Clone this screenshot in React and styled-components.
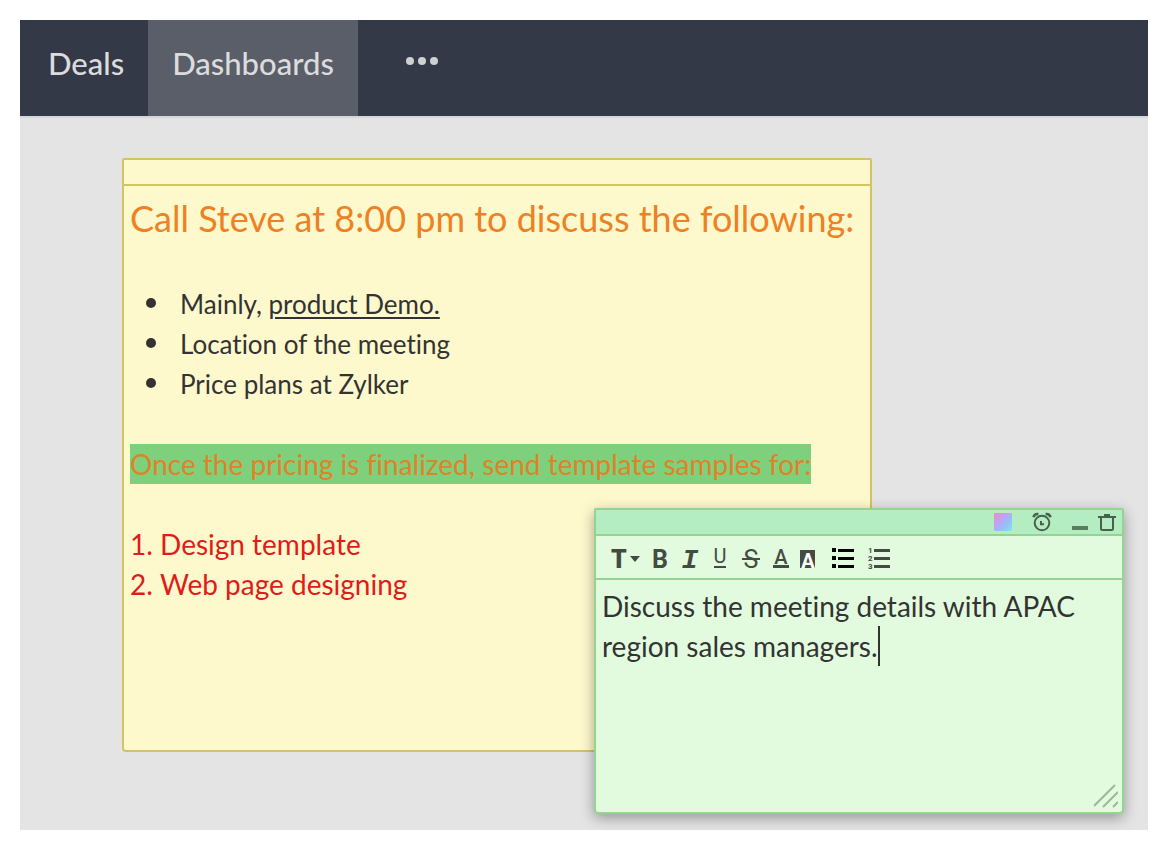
import React, { useState } from 'react';
import styled, { createGlobalStyle } from 'styled-components';

const GlobalStyle = createGlobalStyle`
  *, *::before, *::after { box-sizing: border-box; }
  body {
    margin: 0;
    background: #fff;
    color: #333;
    font-family: Lato, 'Liberation Sans', sans-serif;
    font-size: 28px;
    line-height: 40px;
    font-variant-ligatures: none;
  }
`;

const Page = styled.div`
  display: flex;
  flex-direction: column;
  min-height: 100vh;
  padding: 20px;
`;

const Nav = styled.nav`
  display: flex;
  height: 98px;
  padding-left: 4px;
  background: #343947;
  border-bottom: 2px solid #d8d5da;
`;

const Tab = styled.a`
  display: flex;
  align-items: center;
  padding: 0 24px 10px;
  background: ${(p) => (p.$active ? '#5a5e69' : 'transparent')};
  color: #dcdcde;
  font-size: 31px;
  font-weight: 500;
  text-decoration: none;
`;

const MoreButton = styled.button`
  display: flex;
  align-items: center;
  gap: 4px;
  margin-left: 48px;
  padding: 0 0 14px;
  border: 0;
  background: none;
`;

const Dot = styled.span`
  width: 8px;
  height: 8px;
  border-radius: 50%;
  background: #cfd0d2;
`;

const Board = styled.main`
  position: relative;
  flex: 1;
  min-height: 712px;
  background: #e4e4e4;
`;

const Note = styled.section`
  position: absolute;
  display: flex;
  flex-direction: column;
  left: ${(p) => p.$x}px;
  top: ${(p) => p.$y}px;
  width: ${(p) => p.$w}px;
  min-height: ${(p) => p.$h}px;
  border: 2px solid ${(p) => p.$line};
  border-radius: 2px 2px 4px 4px;
  background: ${(p) => p.$fill};
  box-shadow: ${(p) => (p.$raised ? '0 4px 14px rgba(0, 0, 0, 0.35)' : 'none')};
`;

const NoteBar = styled.header`
  display: flex;
  align-items: center;
  justify-content: flex-end;
  gap: 20px;
  height: 26px;
  padding-right: 6px;
  border-bottom: 2px solid ${(p) => p.$line};
  background: ${(p) => p.$fill};
`;

const BarGroup = styled.div`
  display: flex;
  gap: 10px;
`;

const IconButton = styled.button`
  display: flex;
  align-items: center;
  justify-content: center;
  flex: none;
  width: ${(p) => p.$w}px;
  height: 20px;
  padding: 0;
  border: 0;
  background: none;

  svg { display: block; overflow: visible; }
`;

const Swatch = styled.span`
  width: 18px;
  height: 18px;
  border-radius: 1px;
  background: linear-gradient(135deg, #ee8fc0 0%, #b9a5f8 42%, #8fc5f5 70%, #84e6ea 100%);
`;

const NoteBody = styled.div`
  padding: 6px;
`;

const NoteTitle = styled.h1`
  margin: 0 0 40px;
  color: #ed8124;
  font-size: 36px;
  font-weight: 400;
  line-height: 52px;
  white-space: nowrap;
`;

const Bullets = styled.ul`
  margin: 0 0 40px;
  padding: 0;
  list-style: none;
  font-size: 26px;

  li { display: flex; align-items: center; }
  li::before {
    content: '';
    width: 10px;
    height: 10px;
    margin: 0 24px 2px 16px;
    border-radius: 50%;
    background: #333;
  }
  u { text-decoration-thickness: 2px; text-underline-offset: 3px; }
`;

const Highlight = styled.mark`
  display: inline-block;
  margin-bottom: 40px;
  background: #7fd07c;
  color: #e08228;
`;

const Steps = styled.ol`
  margin: 0;
  padding: 0;
  list-style-position: inside;
  color: #e01b1b;
`;

const Toolbar = styled.div`
  display: flex;
  align-items: center;
  height: 44px;
  padding: 2px 0 0 12px;
  border-bottom: 2px solid ${(p) => p.$line};
`;

const Editor = styled.div`
  position: relative;
  display: flex;
  flex: 1;
`;

const NoteText = styled.textarea`
  flex: 1;
  padding: 6px;
  border: 0;
  outline: 0;
  background: transparent;
  color: #333;
  caret-color: transparent;
  font: inherit;
  font-variant-ligatures: none;
  resize: none;
`;

const Caret = styled.span`
  position: absolute;
  top: 46px;
  left: 282px;
  width: 2px;
  height: 40px;
  background: #333;
`;

const Grip = styled.svg`
  position: absolute;
  right: 4px;
  bottom: 4px;
`;

const ink = '#454b43';
const green = '#94d493';

function Glyph({ char, family = 'Roboto', size, weight = 400, italic, baseline = 20, fill = ink, children }) {
  return (
    <svg width="20" height="20" viewBox="0 0 20 20" aria-hidden="true">
      {children}
      <text
        x="10"
        y={baseline}
        textAnchor="middle"
        fontFamily={`${family}, sans-serif`}
        fontSize={size}
        fontWeight={weight}
        fontStyle={italic ? 'italic' : 'normal'}
        fill={fill}
      >
        {char}
      </text>
    </svg>
  );
}

function AlarmIcon() {
  return (
    <svg width="20" height="20" viewBox="0 0 20 20" fill="none" stroke="#47614d" aria-hidden="true">
      <circle cx="10" cy="11" r="7.3" strokeWidth="2" />
      <path d="M9 9v3.2h3" strokeWidth="2" />
      <path d="M1.5 5.2C2 3 4 1.8 6.4 2M18.5 5.2C18 3 16 1.8 13.6 2" strokeWidth="2.6" />
    </svg>
  );
}

function TrashIcon() {
  return (
    <svg width="18" height="18" viewBox="0 0 18 18" fill="none" stroke="#47614d" strokeWidth="2" aria-hidden="true">
      <path d="M0 4h18M3 4v11.5q0 1.500 1.500 1.500h9q1.500 0 1.500-1.500V4" />
      <path d="M6 2h6" />
    </svg>
  );
}

function BulletListIcon() {
  return (
    <svg width="22" height="20" viewBox="0 0 22 20" fill="#000" aria-hidden="true">
      {[0, 8, 16].map((y) => (
        <g key={y}>
          <rect x="0" y={y} width="4" height="4" />
          <rect x="6" y={y + 1} width="16" height="3" />
        </g>
      ))}
    </svg>
  );
}

function NumberListIcon() {
  return (
    <svg width="22" height="20" viewBox="0 0 22 20" fill={ink} aria-hidden="true">
      {[0, 8, 16].map((y, i) => (
        <g key={y}>
          <text x="0" y={y + 5} fontFamily="Roboto, sans-serif" fontWeight="700" fontSize="8">
            {i + 1}
          </text>
          <rect x="6" y={y + 1} width="16" height="3" />
        </g>
      ))}
    </svg>
  );
}

export default function App() {
  const [text, setText] = useState('Discuss the meeting details with APAC region sales managers.');

  return (
    <Page>
      <GlobalStyle />
      <Nav>
        <Tab href="#deals">Deals</Tab>
        <Tab href="#dashboards" $active aria-current="page">Dashboards</Tab>
        <MoreButton aria-label="More">
          <Dot />
          <Dot />
          <Dot />
        </MoreButton>
      </Nav>

      <Board>
        <Note $x={102} $y={40} $w={750} $h={594} $line="#d2c463" $fill="#fef9cc">
          <NoteBar $line="#d2c463" />
          <NoteBody>
            <NoteTitle>Call Steve at 8:00 pm to discuss the following:</NoteTitle>
            <Bullets>
              <li><span>Mainly, <u>product Demo.</u></span></li>
              <li>Location of the meeting</li>
              <li>Price plans at Zylker</li>
            </Bullets>
            <Highlight>Once the pricing is finalized, send template samples for:</Highlight>
            <Steps>
              <li>Design template</li>
              <li>Web page designing</li>
            </Steps>
          </NoteBody>
        </Note>

        <Note $x={574} $y={390} $w={530} $h={306} $line={green} $fill="#e2fbdf" $raised>
          <NoteBar $line={green} $fill="#b5edc3">
            <IconButton $w={18} aria-label="Note colour"><Swatch /></IconButton>
            <IconButton $w={20} aria-label="Set reminder"><AlarmIcon /></IconButton>
            <BarGroup>
              <IconButton $w={16} aria-label="Minimize">
                <svg width="16" height="20" viewBox="0 0 16 20" aria-hidden="true">
                  <rect y="14" width="16" height="4" fill="#5a7d62" />
                </svg>
              </IconButton>
              <IconButton $w={18} aria-label="Delete"><TrashIcon /></IconButton>
            </BarGroup>
          </NoteBar>
          <Toolbar $line={green} role="toolbar" aria-label="Formatting">
            <IconButton $w={37} aria-label="Text size">
              <Glyph char="T" size={25} weight={900} />
              <svg width="15" height="20" viewBox="0 0 15 20" aria-hidden="true">
                <path d="M1 8h10l-5 6z" fill={ink} />
              </svg>
            </IconButton>
            <IconButton $w={30} aria-label="Bold"><Glyph char="B" size={25} weight={700} /></IconButton>
            <IconButton $w={30} aria-label="Italic">
              <Glyph char="I" family="'Liberation Mono'" size={28} weight={700} italic />
            </IconButton>
            <IconButton $w={30} aria-label="Underline">
              <Glyph char="U" size={20} baseline={15}><rect x="4" y="18" width="12" height="2" fill={ink} /></Glyph>
            </IconButton>
            <IconButton $w={32} aria-label="Strikethrough">
              <Glyph char="S" size={25}><rect x="1" y="10" width="18" height="2" fill={ink} /></Glyph>
            </IconButton>
            <IconButton $w={28} aria-label="Text colour">
              <Glyph char="A" size={20} weight={500} baseline={16}><rect x="2" y="17" width="16" height="3" fill={ink} /></Glyph>
            </IconButton>
            <IconButton $w={26} aria-label="Highlight colour">
              <Glyph char="A" size={20} weight={700} baseline={20} fill="#fff"><rect x="2" y="2" width="15" height="18" fill={ink} /></Glyph>
            </IconButton>
            <IconButton $w={44} aria-label="Bulleted list"><BulletListIcon /></IconButton>
            <IconButton $w={28} aria-label="Numbered list"><NumberListIcon /></IconButton>
          </Toolbar>
          <Editor>
            <NoteText aria-label="Note text" spellCheck={false} value={text} onChange={(e) => setText(e.target.value)} />
            <Caret />
            <Grip width="24" height="24" viewBox="0 0 24 24" stroke="#9fb59d" strokeWidth="2" aria-hidden="true">
              <path d="M0 22L21 1M9 23l15-15M19 23l5-5" />
            </Grip>
          </Editor>
        </Note>
      </Board>
    </Page>
  );
}
